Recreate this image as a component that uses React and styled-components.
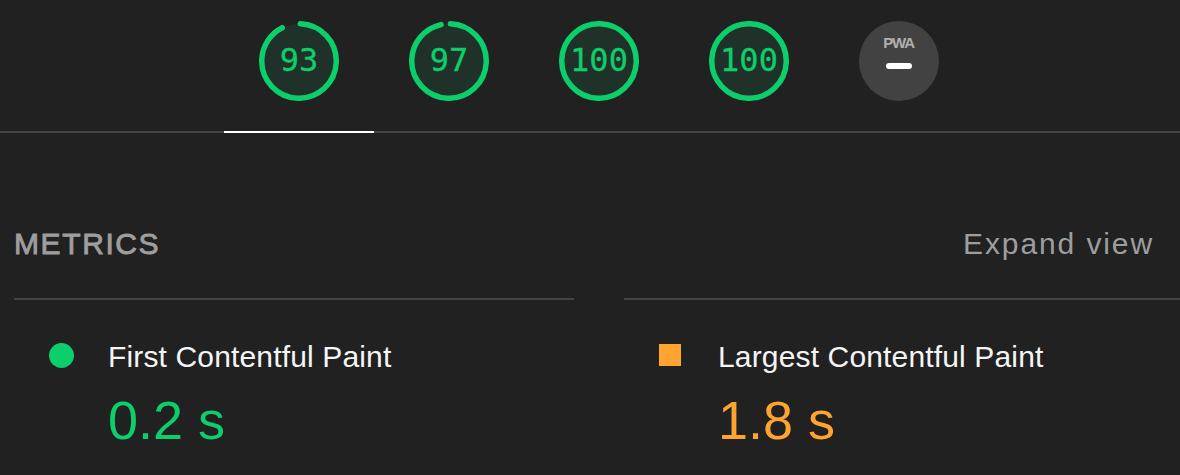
import React from "react";
import styled, { createGlobalStyle } from "styled-components";

const Global = createGlobalStyle`
  html, body {
    margin: 0;
    padding: 0;
    background: #212121;
    overflow: hidden;
  }
  body {
    font-family: "Liberation Sans", Arial, sans-serif;
  }
`;

const Page = styled.div`
  width: 1184px;
  min-height: 475px;
  background: #212121;
`;

const GaugeBar = styled.div`
  display: flex;
  padding-left: 224px;
  border-bottom: 2px solid #444444;
  width: 1180px;
  box-sizing: border-box;
`;

const GaugeTab = styled.div`
  width: 150px;
  display: flex;
  justify-content: center;
  padding: 21px 0 30px;
  margin-bottom: -2px;
  border-bottom: 2px solid ${(p) => (p.$active ? "#ffffff" : "transparent")};
`;

const GaugeWrap = styled.div`
  display: grid;
  width: 80px;
  height: 80px;
  & > * {
    grid-area: 1 / 1;
  }
`;

const GaugeSvg = styled.svg`
  width: 80px;
  height: 80px;
  display: block;
`;

const GaugeValue = styled.div`
  display: flex;
  align-items: center;
  justify-content: center;
  padding-bottom: 3px;
  font-family: "DejaVu Sans Mono", Menlo, monospace;
  font-size: 32px;
  color: #0cce6b;
  -webkit-text-stroke: 0.3px #0cce6b;
`;

const PwaBadge = styled.div`
  width: 80px;
  height: 80px;
  border-radius: 50%;
  background: #424242;
  display: flex;
  flex-direction: column;
  align-items: center;
  padding-top: 14px;
  box-sizing: border-box;
  gap: 12px;
`;

const PwaLabel = styled.span`
  font-family: "Liberation Sans", Arial, sans-serif;
  font-weight: bold;
  font-size: 15px;
  line-height: 16px;
  letter-spacing: -1.2px;
  color: #b0b0b0;
  padding-right: 1px;
`;

const PwaDash = styled.span`
  width: 26px;
  height: 6px;
  border-radius: 3px;
  background: #ffffff;
`;

const Metrics = styled.section`
  padding-left: 14px;
  margin-top: 96px;
`;

const Header = styled.div`
  display: flex;
  justify-content: space-between;
  align-items: baseline;
  padding-right: 30px;
  font-size: 30px;
  line-height: 30px;
  letter-spacing: 1.9px;
  color: #9e9e9e;
`;

const Title = styled.span`
  text-transform: uppercase;
  letter-spacing: 1.6px;
  -webkit-text-stroke: 0.9px #9e9e9e;
`;

const Toggle = styled.span``;

const Grid = styled.div`
  display: grid;
  grid-template-columns: 560px 560px;
  column-gap: 50px;
  margin-top: 39px;
`;

const Metric = styled.div`
  border-top: 2px solid #444444;
  padding: 39px 0 0 35px;
  display: grid;
  grid-template-columns: 25px 1fr;
  column-gap: 34px;
  align-items: center;
`;

const Icon = styled.span`
  width: ${(p) => (p.$shape === "square" ? "22px" : "25px")};
  height: ${(p) => (p.$shape === "square" ? "22px" : "25px")};
  border-radius: ${(p) => (p.$shape === "square" ? "0" : "50%")};
  background: ${(p) => p.$color};
  margin-bottom: 4px;
`;

const Label = styled.div`
  font-size: 30px;
  line-height: 36px;
  letter-spacing: 0.15px;
  color: #f5f5f5;
`;

const Value = styled.div`
  grid-column: 2;
  margin-top: 13px;
  font-size: 54px;
  line-height: 1.2;
  color: ${(p) => p.$color};
`;

const R = 37.25;
const SW = 5.5;
const C = 2 * Math.PI * R;

function Gauge({ score }) {
  const p = score / 100;
  const len = p === 1 ? C : p * C - SW / 2;
  const rot = -90 + ((0.25 * SW) / C) * 360;
  return (
    <GaugeWrap>
      <GaugeSvg viewBox="0 0 80 80">
        <circle cx="40" cy="40" r={R} fill="rgba(12,206,107,0.09)" />
        <circle
          cx="40"
          cy="40"
          r={R}
          fill="none"
          stroke="#0cce6b"
          strokeWidth={SW}
          strokeLinecap="round"
          strokeDasharray={`${len} ${C}`}
          transform={`rotate(${rot} 40 40)`}
        />
      </GaugeSvg>
      <GaugeValue>{score}</GaugeValue>
    </GaugeWrap>
  );
}

const GREEN = "#0cce6b";
const ORANGE = "#ffa431";

export default function App() {
  return (
    <Page>
      <Global />
      <GaugeBar>
        <GaugeTab $active>
          <Gauge score={93} />
        </GaugeTab>
        <GaugeTab>
          <Gauge score={97} />
        </GaugeTab>
        <GaugeTab>
          <Gauge score={100} />
        </GaugeTab>
        <GaugeTab>
          <Gauge score={100} />
        </GaugeTab>
        <GaugeTab>
          <PwaBadge>
            <PwaLabel>PWA</PwaLabel>
            <PwaDash />
          </PwaBadge>
        </GaugeTab>
      </GaugeBar>
      <Metrics>
        <Header>
          <Title>Metrics</Title>
          <Toggle>Expand view</Toggle>
        </Header>
        <Grid>
          <Metric>
            <Icon $color={GREEN} />
            <Label>First Contentful Paint</Label>
            <Value $color={GREEN}>0.2 s</Value>
          </Metric>
          <Metric>
            <Icon $shape="square" $color={ORANGE} />
            <Label>Largest Contentful Paint</Label>
            <Value $color={ORANGE}>1.8 s</Value>
          </Metric>
        </Grid>
      </Metrics>
    </Page>
  );
}
